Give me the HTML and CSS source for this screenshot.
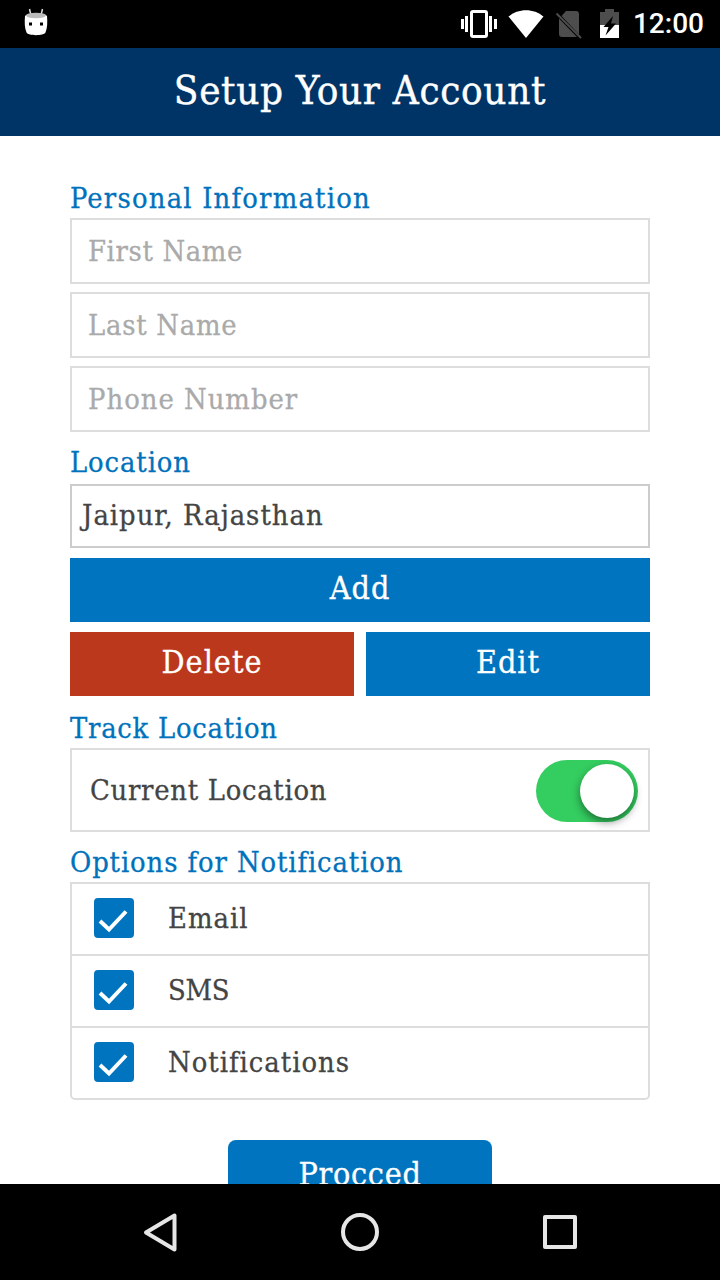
FILE: index.html
```html
<!DOCTYPE html>
<html lang="en">
<head>
<meta charset="utf-8">
<title>Setup Your Account</title>
<link rel="stylesheet" href="styles.css">
</head>
<body>
<div class="screen">
  <div class="statusbar">
    <svg class="debug-icon" width="24" height="28" viewBox="0 0 24 28"><path d="M5.500 1l1.200 5M18.500 1l-1.200 5" stroke="#ddd" stroke-width="1.500"/><path d="M1 8C0.500 14 0.500 20 2.500 24.500C4 28 20 28 21.500 24.500C23.500 20 23.500 14 23 8C21 4.500 3 4.500 1 8z" fill="#fff"/><ellipse cx="12" cy="7.500" rx="10" ry="2.700" fill="#bbb"/><rect x="5" y="14.500" width="3" height="3" fill="#000"/><rect x="16" y="14.500" width="3" height="3" fill="#000"/></svg>
    <svg width="173" height="48" viewBox="0 0 173 48">
      <path d="M1 19h3v10h-3zM5 16h3v16h-3zM29 16h3v16h-3zM34 19h3v10h-3z" fill="#fff"/>
      <rect x="11.500" y="11.500" width="15" height="25" rx="1.500" fill="none" stroke="#fff" stroke-width="3"/>
      <path d="M48.500 16.500C58 8 74 8 83.500 16.500L66 38z" fill="#fff"/>
      <g transform="translate(-10 0)">
        <path d="M116 11h10q3 0 3 3v20.500L111.500 16zM109 18.500L127 37h-15q-3 0-3-3z" fill="#4d4d4d"/>
        <path d="M106.500 13.500L131 38" stroke="#4d4d4d" stroke-width="2"/>
        <path d="M155 9h9v3h5v13h-19V12h5z" fill="#4d4d4d"/><path d="M150 25h19v13h-19z" fill="#fff"/>
        <path d="M163 16L153.500 27h5L155.500 35.500L166 23.500h-5z" fill="#000"/>
      </g>
    </svg>
    <span class="clock">12:00</span>
  </div>
  <header class="titlebar"><h1>Setup Your Account</h1></header>
  <main class="content">
    <h2 class="personal">Personal Information</h2>
    <div class="fields">
      <div class="field first-name">First Name</div>
      <div class="field last-name">Last Name</div>
      <div class="field phone">Phone Number</div>
    </div>
    <h2 class="loc">Location</h2>
    <div class="location">Jaipur, Rajasthan</div>
    <div class="btn add">Add</div>
    <div class="pair">
      <div class="btn delete">Delete</div>
      <div class="btn">Edit</div>
    </div>
    <h2 class="track">Track Location</h2>
    <div class="toggle-row"><span>Current Location</span><div class="switch"><div class="knob"></div></div></div>
    <h2 class="options">Options for Notification</h2>
    <div class="list">
      <div class="row"><svg class="check" width="40" height="40"><path d="M6 23L15 31.500L32 13.500"/></svg><span>Email</span></div>
      <div class="row"><svg class="check" width="40" height="40"><path d="M6 23L15 31.500L32 13.500"/></svg><span class="sms">SMS</span></div>
      <div class="row"><svg class="check" width="40" height="40"><path d="M6 23L15 31.500L32 13.500"/></svg><span>Notifications</span></div>
    </div>
    <div class="btn proceed">Procced</div>
  </main>
  <nav class="navbar">
    <svg width="720" height="96" viewBox="0 0 720 96" fill="none" stroke="#e6e6e6" stroke-width="4" stroke-linejoin="round"><path d="M146 48.500L174.500 31.500V65.500z"/><circle cx="360" cy="48" r="17"/><rect x="545" y="33" width="30" height="30"/></svg>
  </nav>
</div>
</body>
</html>
```
FILE: styles.css
```css
* { box-sizing: border-box; }
body { margin: 0; }
.screen { width: 720px; height: 1280px; overflow: hidden; display: flex; flex-direction: column; background: #fff; font: 28.8px/32px "DejaVu Serif Condensed", "DejaVu Serif", serif; font-stretch: condensed; color: #444; }
.statusbar { height: 48px; flex: none; background: #000; display: flex; align-items: center; padding: 0 16px 0 24px; }
.debug-icon { margin-right: auto; margin-bottom: 4px; }
.statusbar svg { flex: none; }
.clock { font: 500 28px/50px Roboto, sans-serif; color: #fff; }
.titlebar { height: 88px; flex: none; background: #036; color: #fff; text-align: center; }
h1 { margin: 0; font-weight: 400; font-size: 40px; line-height: 84px; letter-spacing: .65px; -webkit-text-stroke: .4px; }
.content { flex: 1; min-height: 0; overflow: hidden; padding: 46px 70px 0; -webkit-text-stroke: .3px; }
h2 { margin: 0 0 4px; font-weight: 400; font-size: 28.8px; line-height: 32px; color: #0072bc; }
.personal { letter-spacing: 1.2px; }
.fields { display: flex; flex-direction: column; gap: 8px; }
.field { height: 66px; border: 2px solid #ddd; padding: 0 16px; line-height: 62px; color: #aaa; }
.first-name { letter-spacing: .65px; }
.last-name { letter-spacing: .75px; }
.phone { letter-spacing: 1px; }
.loc { margin: 14px 0 6px; letter-spacing: .9px; }
.location { height: 64px; border: 2px solid #ccc; padding: 0 10px; line-height: 58px; letter-spacing: 1px; }
.btn { height: 64px; background: #0074be; color: #fff; text-align: center; font-size: 32px; line-height: 60px; letter-spacing: 1px; }
.add { margin: 10px 0; }
.pair { display: grid; grid-template-columns: 1fr 1fr; gap: 12px; }
.delete { background: #bb381c; }
.track { margin-top: 16px; letter-spacing: .75px; }
.toggle-row { height: 84px; border: 2px solid #ddd; padding: 0 10px 0 18px; display: flex; align-items: center; justify-content: space-between; letter-spacing: .72px; }
.switch { width: 102px; height: 62px; margin-top: 2px; border-radius: 31px; background: #34cd60; padding: 4px; }
.knob { width: 54px; height: 54px; margin-left: auto; border-radius: 50%; background: #fff; box-shadow: 0 4px 8px rgba(0,0,0,.45); }
.options { margin-top: 14px; letter-spacing: .9px; }
.list { border: 2px solid #ddd; border-radius: 0 0 5px 5px; letter-spacing: 1px; }
.row { height: 72px; padding: 0 22px 2px; display: flex; align-items: center; gap: 34px; border-bottom: 2px solid #ddd; }
.row span { padding-bottom: 1px; }
.row:last-child { height: 70px; border-bottom: 0; }
.sms { letter-spacing: -.3px; }
.check { background: #0074be; border-radius: 4px; fill: none; stroke: #fff; stroke-width: 4; }
.proceed { width: 264px; height: 68px; margin: 40px auto 0; border-radius: 8px; line-height: 68px; letter-spacing: .7px; }
.navbar { height: 96px; flex: none; background: #000; }
.navbar svg { display: block; }
```
